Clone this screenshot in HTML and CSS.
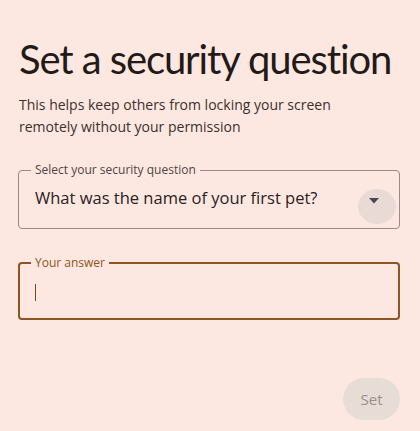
FILE: index.html
```html
<!DOCTYPE html>
<html lang="en">
<head>
    <meta charset="UTF-8">
    <meta name="viewport" content="width=device-width, initial-scale=1.0">
    <title>Set a security question</title>
    <link rel="stylesheet" href="styles.css">
</head>
<body>
    <div class="screen">
        <h1>Set a security question</h1>
        <p class="intro">This helps keep others from locking your screen remotely without your permission</p>

        <!-- Security question dropdown -->
        <fieldset class="field">
            <legend>Select your security question</legend>
            <div class="select-row">
                <span class="select-value">What was the name of your first pet?</span>
                <span class="ripple"></span>
                <svg class="arrow" width="10" height="6" viewBox="0 0 10 6"><path d="M0 0h10L5 5.5z" fill="#4a4455"/></svg>
            </div>
        </fieldset>

        <!-- Answer input -->
        <fieldset class="field focused">
            <legend>Your answer</legend>
            <div class="input-row"><span class="caret"></span></div>
        </fieldset>

        <div class="actions">
            <button class="set-button" disabled>Set</button>
        </div>
    </div>
</body>
</html>
```

FILE: styles.css
```css
body {
    margin: 0;
    padding: 0;
    background-color: #fce8e1;
    font-family: 'Open Sans', 'Roboto', sans-serif;
}
.screen {
    width: 420px;
    height: 431px;
    padding: 34px 20px 0 19px;
    box-sizing: border-box;
    overflow: hidden;
}
h1 {
    margin: 0;
    font-family: 'Lato', sans-serif;
    font-weight: 400;
    font-size: 40px;
    line-height: 50px;
    letter-spacing: -1.1px;
    color: #231a17;
    white-space: nowrap;
}
.intro {
    margin: 10px 0 0;
    font-size: 14px;
    line-height: 22px;
    color: #3b302c;
    width: 340px;
}
.field {
    margin: 26px 0 0 -1px;
    padding: 0 16px;
    border: 1px solid #9a8a84;
    border-radius: 4px;
    height: 65px;
    box-sizing: border-box;
}
.field legend {
    padding: 0 4px;
    margin-left: -4px;
    font-size: 12px;
    line-height: 12px;
    color: #51443f;
}
.select-row {
    position: relative;
    display: flex;
    align-items: center;
    height: 51px;
    margin-top: -4px;
}
.select-value {
    font-size: 16.5px;
    color: #2a211e;
}
.ripple {
    position: absolute;
    right: -13px;
    top: 17px;
    width: 38px;
    height: 35px;
    border-radius: 50%;
    background-color: #e9dad5;
}
.arrow {
    position: absolute;
    right: 4px;
    top: 26px;
}
.field.focused {
    margin-top: 28px;
    border: 2px solid #8c5523;
    height: 63px;
    padding: 0 15px;
}
.field.focused legend {
    color: #8c5523;
}
.input-row {
    height: 47px;
    display: flex;
    align-items: center;
}
.caret {
    width: 1px;
    height: 17px;
    background-color: #6b4a2e;
}
.actions {
    display: flex;
    justify-content: flex-end;
    margin-top: 58px;
}
.set-button {
    width: 57px;
    height: 42px;
    border: none;
    border-radius: 21px;
    background-color: #e8dcd7;
    color: #9a8f8b;
    font-family: 'Open Sans', 'Roboto', sans-serif;
    font-size: 15px;
}
```
